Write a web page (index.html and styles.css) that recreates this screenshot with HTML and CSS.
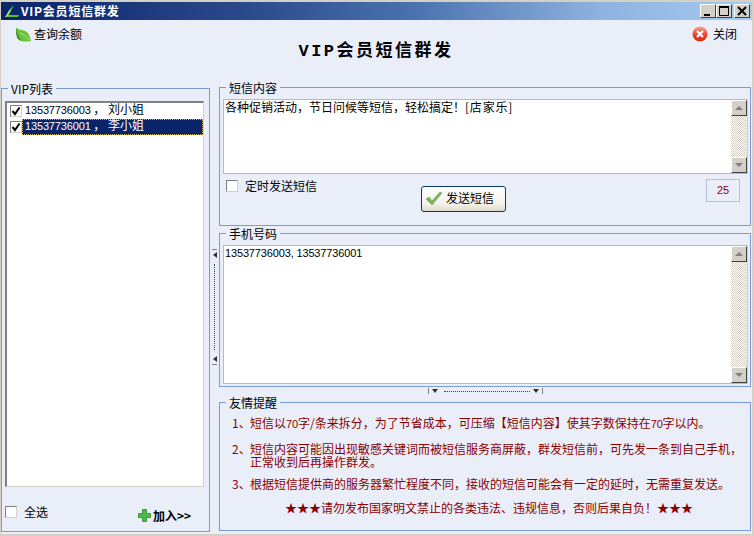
FILE: index.html
```html
<!DOCTYPE html>
<html lang="zh-CN">

<head>
    <title>VIP会员短信群发</title>
    <link rel="stylesheet" href="styles.css">
</head>

<body>
    <div class="window">
        <div class="titlebar">
            <svg class="title-icon" width="16" height="14" viewBox="0 0 16 14">
                <path d="M1 13 L6 5 L10 1 L7 7 L5 11 L15 11 L14 13 Z" fill="#5fbf2a" />
                <path d="M2 13 L6 6" stroke="#d8f0b0" stroke-width="1" />
            </svg>
            <span class="title-text">VIP会员短信群发</span>
            <div class="title-buttons">
                <span class="win-btn"><svg width="14" height="12" viewBox="0 0 14 12"><rect x="3" y="9" width="6" height="2" fill="#000" /></svg></span>
                <span class="win-btn"><svg width="14" height="12" viewBox="0 0 14 12"><path d="M2.5 2.5h9v8h-9z" fill="none" stroke="#000" /><rect x="2" y="1" width="10" height="2" fill="#000" /></svg></span>
                <span class="win-btn win-close"><svg width="14" height="12" viewBox="0 0 14 12"><path d="M3 2 L11 10 M11 2 L3 10" stroke="#000" stroke-width="2" /></svg></span>
            </div>
        </div>

        <div class="header">
            <div class="action">
                <svg width="16" height="15" viewBox="0 0 16 15">
                    <path d="M1 0 C2 3 6 2 10 4 C14 6 15 10 16 14 C11 15 5 15 3 12 C1 9 1 4 1 0 Z" fill="#6cc23a" />
                    <path d="M1 1 C2 6 3 10 6 13 L3 12 C1 9 1 4 1 1 Z" fill="#2e8b1e" />
                    <path d="M5 6 C8 7 11 9 14 13" stroke="#b5e58c" fill="none" />
                </svg>
                <span>查询余额</span>
            </div>
            <h1 class="page-title">VIP会员短信群发</h1>
            <div class="action action-close">
                <svg width="16" height="16" viewBox="0 0 16 16">
                    <defs>
                        <linearGradient id="redball" x1="0" y1="0" x2="0" y2="1">
                            <stop offset="0" stop-color="#f0a898" />
                            <stop offset="0.55" stop-color="#e8452a" />
                            <stop offset="1" stop-color="#d82c10" />
                        </linearGradient>
                    </defs>
                    <circle cx="8" cy="8" r="7.5" fill="url(#redball)" />
                    <path d="M5 5 L11 11 M11 5 L5 11" stroke="#fff" stroke-width="2.2" />
                </svg>
                <span>关闭</span>
            </div>
        </div>

        <div class="main">
            <fieldset class="panel panel-vip">
                <legend>VIP列表</legend>
                <div class="vip-list">
                    <div class="vip-row">
                        <span class="check check-on"><svg width="10" height="10" viewBox="0 0 10 10"><path d="M1.5 5 L4 8 L8.5 1.5" fill="none" stroke="#000" stroke-width="2" /></svg></span>
                        <span class="vip-name"><span class="num">13537736003</span> ， 刘小姐</span>
                    </div>
                    <div class="vip-row">
                        <span class="check check-on"><svg width="10" height="10" viewBox="0 0 10 10"><path d="M1.5 5 L4 8 L8.5 1.5" fill="none" stroke="#000" stroke-width="2" /></svg></span>
                        <span class="vip-name vip-selected"><span class="num">13537736001</span> ， 李小姐</span>
                    </div>
                </div>
                <div class="vip-footer">
                    <label class="check-label">
                        <span class="check"></span>
                        <span>全选</span>
                    </label>
                    <div class="add-btn">
                        <svg width="13" height="13" viewBox="0 0 13 13">
                            <path d="M4.5 0.5h4v4h4v4h-4v4h-4v-4h-4v-4h4z" fill="#4fb84a" stroke="#3c9a3a" />
                        </svg>
                        <span>加入&gt;&gt;</span>
                    </div>
                </div>
            </fieldset>

            <div class="vsplit">
                <span class="vsplit-cap"></span>
                <span class="arrow-left"></span>
                <span class="vsplit-dots"></span>
                <span class="arrow-left"></span>
                <span class="vsplit-cap"></span>
            </div>

            <div class="right-col">
                <fieldset class="panel panel-sms">
                    <legend>短信内容</legend>
                    <div class="memo memo-sms">
                        <div class="memo-text">各种促销活动，节日问候等短信，轻松搞定！<span class="shop">[店家乐]</span></div>
                        <div class="scrollbar">
                            <span class="scroll-btn"><span class="arrow-up"></span></span>
                            <span class="scroll-track"></span>
                            <span class="scroll-btn"><span class="arrow-down"></span></span>
                        </div>
                    </div>
                    <div class="sms-options">
                        <label class="check-label">
                            <span class="check"></span>
                            <span>定时发送短信</span>
                        </label>
                        <div class="send-btn">
                            <svg width="18" height="15" viewBox="0 0 18 15">
                                <path d="M1 8 L4 6 L7 10 L15 1 L17 2 L7 14 Z" fill="#6cc04a" stroke="#8a9a80" stroke-width="0.7" />
                            </svg>
                            <span>发送短信</span>
                        </div>
                        <div class="counter"><span class="num">25</span></div>
                    </div>
                </fieldset>

                <fieldset class="panel panel-phone">
                    <legend>手机号码</legend>
                    <div class="memo memo-phone">
                        <div class="memo-text"><span class="num">13537736003, 13537736001</span></div>
                        <div class="scrollbar">
                            <span class="scroll-btn"><span class="arrow-up"></span></span>
                            <span class="scroll-track"></span>
                            <span class="scroll-btn"><span class="arrow-down"></span></span>
                        </div>
                    </div>
                </fieldset>

                <div class="hsplit">
                    <span class="hsplit-cap"></span>
                    <span class="arrow-down-dark"></span>
                    <span class="hsplit-dots"></span>
                    <span class="arrow-down-dark"></span>
                    <span class="hsplit-cap"></span>
                </div>

                <fieldset class="panel panel-tips">
                    <legend>友情提醒</legend>
                    <div class="tip">
                        <span class="tip-no">1、</span>
                        <span>短信以<span class="num">70</span>字/条来拆分，为了节省成本，可压缩【短信内容】使其字数保持在<span class="num">70</span>字以内。</span>
                    </div>
                    <div class="tip tip-multi">
                        <span class="tip-no">2、</span>
                        <span>短信内容可能因出现敏感关键词而被短信服务商屏蔽，群发短信前，可先发一条到自己手机，<br>正常收到后再操作群发。</span>
                    </div>
                    <div class="tip">
                        <span class="tip-no">3、</span>
                        <span>根据短信提供商的服务器繁忙程度不同，接收的短信可能会有一定的延时，无需重复发送。</span>
                    </div>
                    <div class="tip-warn">★★★请勿发布国家明文禁止的各类违法、违规信息，否则后果自负！★★★</div>
                </fieldset>
            </div>
        </div>
    </div>
</body>

</html>
```

FILE: styles.css
```css
* {
    box-sizing: border-box;
}

body {
    margin: 0;
    font-family: "Noto Sans CJK SC", "Liberation Sans", sans-serif;
    font-size: 12px;
    line-height: 12px;
    color: #000;
    background-color: #d4d0c8;
}

.num {
    font-family: "Liberation Sans", sans-serif;
    font-size: 11px;
    letter-spacing: -0.15px;
}

.window {
    display: flex;
    flex-direction: column;
    width: 754px;
    height: 536px;
    border-style: solid;
    border-color: #d4d0c8;
    border-width: 2px 2px 2px 1px;
    background-color: #e9eef9;
}

/* title bar */
.titlebar {
    display: flex;
    align-items: center;
    height: 18px;
    padding-left: 3px;
    background: linear-gradient(to right, #0a246a, #2b4a8c 33%, #4a72ae 55%, #8fb3e0 80%, #a6caf0);
}

.title-icon {
    margin-right: 1px;
}

.title-text {
    color: #fff;
    font-weight: bold;
    letter-spacing: 0.8px;
}

.title-buttons {
    display: flex;
    margin-left: auto;
    margin-right: 2px;
}

.win-btn {
    display: flex;
    width: 16px;
    height: 14px;
    border: 1px solid;
    border-color: #fff #404040 #404040 #fff;
    background-color: #d4d0c8;
}

.win-close {
    margin-left: 2px;
}

/* header */
.header {
    display: grid;
    grid-template-columns: 1fr auto 1fr;
    height: 60px;
    padding: 6px 15px 0 14px;
}

.action {
    display: flex;
    align-items: center;
    gap: 3px;
    height: 16px;
}

.action-close {
    justify-content: flex-end;
    gap: 5px;
}

.page-title {
    margin: 16px 0 0;
    font-family: "Liberation Mono", "Noto Sans CJK SC", sans-serif;
    font-size: 17px;
    line-height: 20px;
    font-weight: bold;
    letter-spacing: 2.5px;
}

/* main area */
.main {
    display: flex;
    flex: 1;
    min-height: 0;
}

.panel {
    margin: 0;
    min-width: 0;
    padding: 4px 3px 3px;
    border: 1px solid #7b9bd4;
    border-radius: 0;
}

.panel legend {
    margin-left: 3px;
    padding: 0 3px;
    line-height: 15px;
}

.panel-vip {
    display: flex;
    flex-direction: column;
    width: 209px;
    height: 451px;
    margin-top: 1px;
    padding: 5px 5px 0 3px;
}

.vip-list {
    width: 199px;
    height: 386px;
    padding-left: 3px;
    border-style: solid;
    border-width: 2px 1px 1px 2px;
    border-color: #808080 #d4d0c8 #d4d0c8 #808080;
    background-color: #fff;
}

.vip-row {
    display: flex;
    align-items: center;
    height: 16px;
}

.vip-name {
    flex: 1;
    height: 16px;
    padding: 0 3px;
    white-space: nowrap;
}

.vip-selected {
    color: #fff;
    background-color: #0a246a;
    outline: 1px dotted #c8b060;
    outline-offset: -1px;
}

.vip-footer {
    display: flex;
    align-items: flex-start;
    margin-top: 19px;
}

.check-label {
    display: flex;
    align-items: center;
    gap: 7px;
}

.check {
    display: flex;
    flex-shrink: 0;
    width: 12px;
    height: 12px;
    border: 1px solid;
    border-color: #808080 #d4d0c8 #d4d0c8 #808080;
    background-color: #fff;
}

.add-btn {
    display: flex;
    align-items: center;
    gap: 2px;
    margin: 3px 0 0 90px;
    font-weight: bold;
}

/* splitters */
.vsplit {
    display: flex;
    flex-direction: column;
    align-items: center;
    width: 9px;
    padding-top: 169px;
}

.vsplit-cap {
    width: 5px;
    height: 1px;
    background-color: #808080;
}

.vsplit-dots {
    height: 86px;
    margin: 4px 0;
    border-left: 1px dotted #404040;
}

.arrow-left {
    margin-top: 2px;
    margin-bottom: 2px;
    border-style: solid;
    border-width: 3px 4px 3px 0;
    border-color: transparent #303030 transparent transparent;
}

.hsplit {
    display: flex;
    align-items: center;
    justify-content: center;
    height: 8px;
    gap: 3px;
}

.hsplit-cap {
    width: 1px;
    height: 6px;
    background-color: #808080;
}

.hsplit-dots {
    width: 86px;
    margin-left: 3px;
    border-top: 1px dotted #404040;
}

.arrow-down-dark {
    border-style: solid;
    border-width: 4px 3px 0;
    border-color: #303030 transparent transparent;
}

.right-col {
    display: flex;
    flex-direction: column;
    width: 532px;
}

.panel-sms {
    height: 146px;
}

.panel-phone {
    height: 161px;
}

.panel-tips {
    height: 136px;
    padding: 6px 0 0;
}

.panel-tips legend {
    margin-left: 6px;
}

/* memo boxes */
.memo {
    display: flex;
    width: 525px;
    border: 1px solid;
    border-color: #a9bcdc #d4d0c8 #a9bcdc #a9bcdc;
    background-color: #fff;
}

.memo-sms {
    height: 75px;
}

.memo-phone {
    height: 139px;
}

.memo-text {
    flex: 1;
    padding: 1px;
}

.memo-phone .memo-text {
    padding-top: 0;
}

.shop {
    letter-spacing: 0.8px;
}

.scrollbar {
    display: flex;
    flex-direction: column;
    width: 16px;
}

.scroll-btn {
    display: flex;
    align-items: center;
    justify-content: center;
    height: 16px;
    border: 1px solid;
    border-color: #fff #404040 #404040 #fff;
    background-color: #d4d0c8;
}

.scroll-track {
    flex: 1;
    background: repeating-conic-gradient(#d4d0c8 0% 25%, #fff 0% 50%) 0 0 / 2px 2px;
}

.arrow-up {
    border-style: solid;
    border-width: 0 4px 4px;
    border-color: transparent transparent #808080;
}

.arrow-down {
    border-style: solid;
    border-width: 4px 4px 0;
    border-color: #808080 transparent transparent;
}

/* sms options row */
.sms-options {
    display: flex;
    align-items: flex-start;
}

.sms-options .check-label {
    margin: 6px 0 0 3px;
}

.send-btn {
    display: flex;
    align-items: center;
    gap: 3px;
    width: 85px;
    height: 26px;
    margin: 12px 0 0 104px;
    padding: 0 0 2px 3px;
    border: 1px solid #0a3a6a;
    border-radius: 3px;
    background: linear-gradient(to bottom, #fff, #f4f2ea 70%, #dcd8cc);
}

.counter {
    display: flex;
    align-items: center;
    justify-content: center;
    width: 34px;
    height: 23px;
    margin: 5px 7px 0 auto;
    padding-bottom: 1px;
    border: 1px solid #b0c2e0;
    color: #8b0000;
}

/* tips */
.tip {
    display: flex;
    margin: 0 0 11px 12px;
    line-height: 13px;
    color: #8b0000;
    white-space: nowrap;
}

.tip-multi {
    margin-bottom: 9px;
}

.tip-no {
    width: 18px;
}

.tip-warn {
    margin-left: 65px;
    line-height: 13px;
    color: #8b0000;
    white-space: nowrap;
}
```
